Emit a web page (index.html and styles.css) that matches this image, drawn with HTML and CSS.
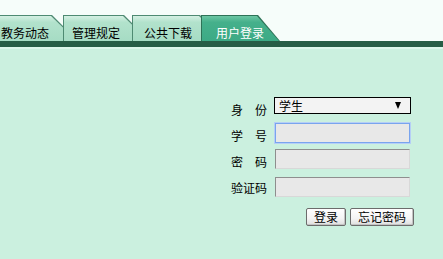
FILE: index.html
```html
<!DOCTYPE html>
<html lang="zh-CN">
<head>
<meta charset="utf-8">
<title>用户登录</title>
<link rel="stylesheet" href="styles.css">
</head>
<body>
<div class="header">
  <div class="tabs">
    <div class="tab tab-1"><span class="tab-face">教务动态</span></div>
    <div class="tab tab-2"><span class="tab-face">管理规定</span></div>
    <div class="tab tab-3"><span class="tab-face">公共下载</span></div>
    <div class="tab tab-4 active"><span class="tab-face">用户登录</span></div>
  </div>
</div>
<div class="bar"></div>
<div class="bar-line"></div>
<div class="main">
  <form class="login">
    <div class="grid">
      <label class="lbl">身　份</label>
      <div class="select"><span class="select-text">学生</span><span class="arrow"></span></div>
      <label class="lbl">学　号</label>
      <input class="field focused" type="text">
      <label class="lbl">密　码</label>
      <input class="field" type="password">
      <label class="lbl lbl-last">验证码</label>
      <input class="field" type="text">
    </div>
    <div class="actions">
      <button type="button" class="btn">登录</button>
      <button type="button" class="btn">忘记密码</button>
    </div>
  </form>
</div>
</body>
</html>
```
FILE: styles.css
```css
html, body {
  margin: 0;
  padding: 0;
}
body {
  background: #cbf0df;
  font-family: "Noto Sans CJK SC", "Liberation Sans", sans-serif;
  font-size: 12px;
  color: #000;
}
.header {
  background: #f6fdfa;
  padding-top: 15px;
  overflow: hidden;
}
.tabs {
  display: flex;
  height: 26px;
}
.tab {
  flex: none;
  height: 26px;
  background: #4e8a72;
  clip-path: polygon(0 0, calc(100% - 26px) 0, 100% 100%, 0 100%);
  display: flex;
}
.tab-face {
  flex: 1;
  margin: 1px 0 0 1px;
  background: linear-gradient(#d4f0e3, #b2e2cc 25%, #a6dcc4);
  clip-path: polygon(0 0, calc(100% - 27px) 0, calc(100% - 1px) 100%, 0 100%);
  line-height: 12px;
  padding-top: 11px;
  box-sizing: border-box;
  white-space: nowrap;
  color: #000;
}
.tab-1 { width: 92px; margin-left: -14px; margin-right: -15px; }
.tab-1 .tab-face { padding-left: 14px; }
.tab-2 { width: 87px; margin-right: -18px; }
.tab-2 .tab-face { padding-left: 8px; }
.tab-3 { width: 94px; margin-right: -25px; }
.tab-3 .tab-face { padding-left: 11px; }
.tab-4 {
  width: 79px;
  background: #2e7257;
  clip-path: polygon(0 0, calc(100% - 22px) 0, 100% 100%, 0 100%);
}
.tab-4 .tab-face {
  padding-left: 14px;
  color: #fff;
  background: linear-gradient(#6cc6a3, #45b08b 25%, #3caa85);
  clip-path: polygon(0 0, calc(100% - 23px) 0, calc(100% - 1px) 100%, 0 100%);
}
.bar {
  height: 6px;
  background: #275d46;
}
.bar-line {
  height: 2px;
  background: #dcf6ea;
}
.main {
  padding: 48px 0 0 231px;
}
.login {
  width: 182px;
  margin: 0;
}
.grid {
  display: grid;
  grid-template-columns: 43px 137px;
  grid-template-rows: 26px 26px 28px 31px;
  align-items: start;
}
.lbl {
  padding-top: 7px;
  line-height: 12px;
  white-space: nowrap;
}
.lbl-last {
  padding-top: 5px;
}
.select {
  height: 17px;
  box-sizing: border-box;
  border: 1px solid #000;
  background: #f3f3f3;
  display: flex;
  align-items: center;
  justify-content: space-between;
  padding: 0 9px 0 4px;
}
.select-text {
  line-height: 12px;
  color: #000;
}
.arrow {
  width: 0;
  height: 0;
  border-left: 3.5px solid transparent;
  border-right: 3.5px solid transparent;
  border-top: 7px solid #000;
}
.field {
  width: 135px;
  height: 20px;
  margin: 0 0 0 1px;
  padding: 0;
  box-sizing: border-box;
  background: #e8e8e8;
  border: 1px solid;
  border-color: #8e8e8e #d8d8d8 #d8d8d8 #8e8e8e;
  font: inherit;
  outline: none;
}
.field.focused {
  border: 1px solid #79a4ee;
  box-shadow: 0 0 0 1px #b6cff6;
}
.actions {
  display: flex;
  justify-content: flex-end;
  gap: 4px;
  margin-right: -1px;
}
.btn {
  height: 18px;
  padding: 0 7px;
  box-sizing: border-box;
  font: inherit;
  line-height: 14px;
  color: #000;
  border: 1px solid #6c6c6c;
  border-radius: 2px;
  background: linear-gradient(#ffffff, #f4f4f4 60%, #dedede);
  box-shadow: inset -1px -1px 0 #c4c4c4;
}
```
